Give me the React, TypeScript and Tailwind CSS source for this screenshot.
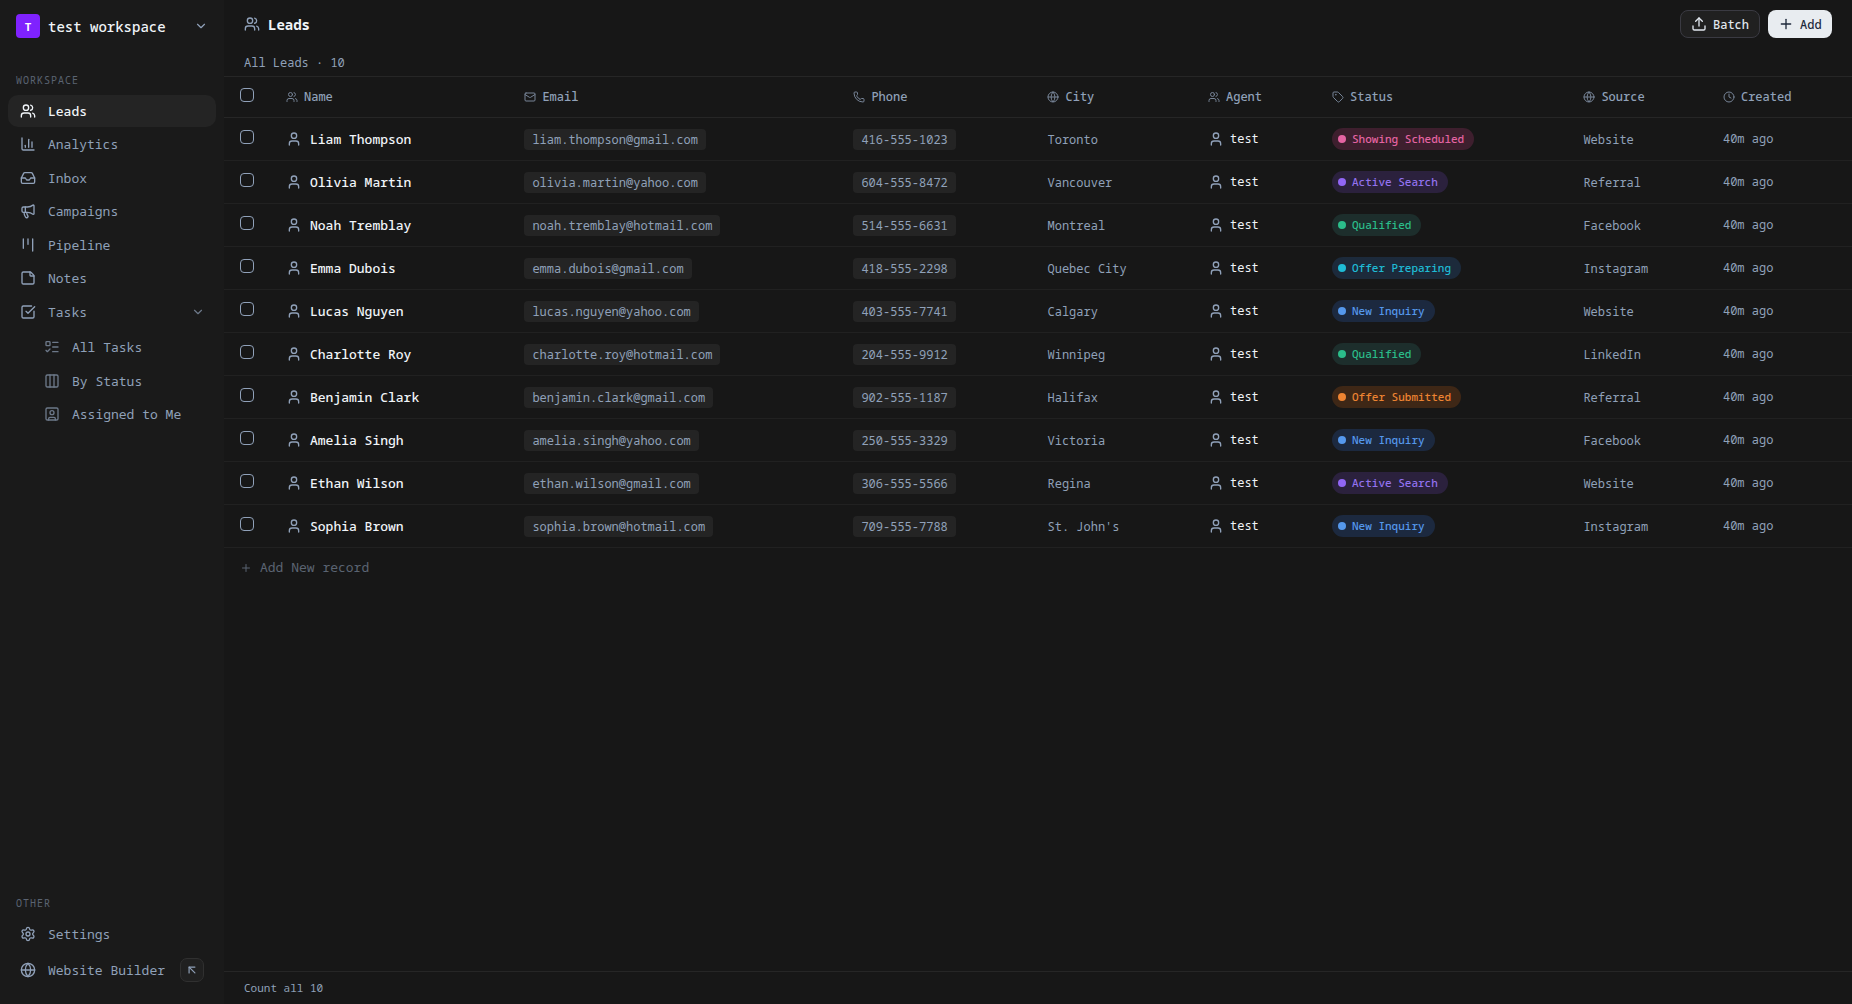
import type { ReactNode } from "react";
import {
  ArrowUpLeft,
  ChartColumn,
  ChevronDown,
  Clock,
  Columns3,
  Globe,
  Inbox,
  Kanban,
  ListTodo,
  Mail,
  Megaphone,
  Phone,
  Plus,
  Settings,
  SquareCheckBig,
  SquareUser,
  StickyNote,
  Tag,
  Upload,
  User,
  Users,
  type LucideIcon,
} from "lucide-react";
import clsx from "clsx";

type Status =
  | "Showing Scheduled"
  | "Active Search"
  | "Qualified"
  | "Offer Preparing"
  | "New Inquiry"
  | "Offer Submitted";

interface Lead {
  name: string;
  email: string;
  phone: string;
  city: string;
  status: Status;
  source: string;
}

const leads: Lead[] = [
  { name: "Liam Thompson", email: "liam.thompson@gmail.com", phone: "416-555-1023", city: "Toronto", status: "Showing Scheduled", source: "Website" },
  { name: "Olivia Martin", email: "olivia.martin@yahoo.com", phone: "604-555-8472", city: "Vancouver", status: "Active Search", source: "Referral" },
  { name: "Noah Tremblay", email: "noah.tremblay@hotmail.com", phone: "514-555-6631", city: "Montreal", status: "Qualified", source: "Facebook" },
  { name: "Emma Dubois", email: "emma.dubois@gmail.com", phone: "418-555-2298", city: "Quebec City", status: "Offer Preparing", source: "Instagram" },
  { name: "Lucas Nguyen", email: "lucas.nguyen@yahoo.com", phone: "403-555-7741", city: "Calgary", status: "New Inquiry", source: "Website" },
  { name: "Charlotte Roy", email: "charlotte.roy@hotmail.com", phone: "204-555-9912", city: "Winnipeg", status: "Qualified", source: "LinkedIn" },
  { name: "Benjamin Clark", email: "benjamin.clark@gmail.com", phone: "902-555-1187", city: "Halifax", status: "Offer Submitted", source: "Referral" },
  { name: "Amelia Singh", email: "amelia.singh@yahoo.com", phone: "250-555-3329", city: "Victoria", status: "New Inquiry", source: "Facebook" },
  { name: "Ethan Wilson", email: "ethan.wilson@gmail.com", phone: "306-555-5566", city: "Regina", status: "Active Search", source: "Website" },
  { name: "Sophia Brown", email: "sophia.brown@hotmail.com", phone: "709-555-7788", city: "St. John's", status: "New Inquiry", source: "Instagram" },
];

const statusStyles: Record<Status, { pill: string; dot: string }> = {
  "Showing Scheduled": { pill: "bg-[#3e1f2e] text-[#e564a3]", dot: "bg-[#e564a3]" },
  "Active Search": { pill: "bg-[#2b213d] text-[#9373f0]", dot: "bg-[#9166f5]" },
  Qualified: { pill: "bg-[#1d2e2c] text-[#2bbd8a]", dot: "bg-[#2bbd8a]" },
  "Offer Preparing": { pill: "bg-[#1c2a3b] text-[#1fbcd6]", dot: "bg-[#1fbcd6]" },
  "New Inquiry": { pill: "bg-[#1c293f] text-[#5598ec]", dot: "bg-[#5598ec]" },
  "Offer Submitted": { pill: "bg-[#3e2716] text-[#ee8432]", dot: "bg-[#ee8432]" },
};

const columns: { label: string; icon: LucideIcon }[] = [
  { label: "Name", icon: Users },
  { label: "Email", icon: Mail },
  { label: "Phone", icon: Phone },
  { label: "City", icon: Globe },
  { label: "Agent", icon: Users },
  { label: "Status", icon: Tag },
  { label: "Source", icon: Globe },
  { label: "Created", icon: Clock },
];

const rowGrid =
  "grid grid-cols-[46px_238.4px_329px_194.1px_160.5px_124px_251.4px_139.6px_1fr] items-center pl-4 border-b";

function NavItem({
  icon: Icon,
  label,
  active,
  nested,
  children,
}: {
  icon: LucideIcon;
  label: string;
  active?: boolean;
  nested?: boolean;
  children?: ReactNode;
}) {
  return (
    <div
      className={clsx(
        "flex h-[31.5px] items-center gap-3 rounded-[10px] pr-[11px]",
        nested ? "pl-9" : "pl-3",
        active ? "bg-[#242424] font-medium text-[#f1f5f9]" : "text-[#90a1b9]"
      )}
    >
      <Icon size={16} className={clsx("shrink-0", nested && "opacity-70")} />
      <span className="pt-px text-[13px] leading-[19.5px]">{label}</span>
      {children}
    </div>
  );
}

function SectionLabel({ children }: { children: ReactNode }) {
  return (
    <div className="px-4 text-[10px] leading-[15px] tracking-[1px] text-[#5b6472]">
      {children}
    </div>
  );
}

function Sidebar() {
  return (
    <aside className="flex w-56 shrink-0 flex-col bg-[#1a1a1a]">
      <div className="flex h-[52px] items-center pl-4 pr-4">
        <div className="flex size-6 items-center justify-center rounded-[4px] bg-[#7f22fe] pt-0.5 text-[11px] font-bold text-white">
          T
        </div>
        <span className="ml-2 text-[14px] font-medium text-[#f1f5f9]">test workspace</span>
        <ChevronDown size={14} className="ml-auto text-[#90a1b9]" />
      </div>

      <div className="mt-[21px]">
        <SectionLabel>WORKSPACE</SectionLabel>
      </div>
      <nav className="mt-[7px] flex flex-col gap-0.5 px-2">
        <NavItem icon={Users} label="Leads" active />
        <NavItem icon={ChartColumn} label="Analytics" />
        <NavItem icon={Inbox} label="Inbox" />
        <NavItem icon={Megaphone} label="Campaigns" />
        <NavItem icon={Kanban} label="Pipeline" />
        <NavItem icon={StickyNote} label="Notes" />
        <NavItem icon={SquareCheckBig} label="Tasks">
          <ChevronDown size={14} className="ml-auto opacity-70" />
        </NavItem>
        <div className="mt-0.5 flex flex-col gap-0.5">
          <NavItem icon={ListTodo} label="All Tasks" nested />
          <NavItem icon={Columns3} label="By Status" nested />
          <NavItem icon={SquareUser} label="Assigned to Me" nested />
        </div>
      </nav>

      <div className="mt-auto pb-4">
        <SectionLabel>OTHER</SectionLabel>
        <nav className="mt-2 flex flex-col gap-0.5 px-2">
          <NavItem icon={Settings} label="Settings" />
          <div className="flex h-9 items-center gap-3 pl-3 pr-3 text-[#90a1b9]">
            <Globe size={16} />
            <span className="pt-px text-[13px]">Website Builder</span>
            <span className="ml-auto flex size-6 items-center justify-center rounded-[7px] border border-[#303030] bg-[#202020]">
              <ArrowUpLeft size={14} />
            </span>
          </div>
        </nav>
      </div>
    </aside>
  );
}

function Checkbox() {
  return <div className="mb-1 size-3.5 rounded-[4px] border border-[#90a1b9]" />;
}

function Chip({ children }: { children: ReactNode }) {
  return (
    <span className="mt-px inline-flex h-[21px] items-center rounded-[4px] bg-[#242424] px-2 pt-px">
      {children}
    </span>
  );
}

function StatusPill({ status }: { status: Status }) {
  const styles = statusStyles[status];
  return (
    <span
      className={clsx(
        "inline-flex h-[22px] items-center gap-1.5 rounded-full pl-1.5 pr-2.5 text-[11px] font-medium",
        styles.pill
      )}
    >
      <span className={clsx("size-2 rounded-full", styles.dot)} />
      {status}
    </span>
  );
}

function LeadRow({ lead }: { lead: Lead }) {
  return (
    <div className={clsx(rowGrid, "h-[43px] border-[#212121] text-[12px] text-[#90a1b9]")}>
      <Checkbox />
      <div className="flex items-center gap-2 text-[13px]">
        <User size={16} />
        <span className="pt-0.5 font-medium text-[#f1f5f9]">{lead.name}</span>
      </div>
      <div className="flex">
        <Chip>{lead.email}</Chip>
      </div>
      <div className="flex">
        <Chip>{lead.phone}</Chip>
      </div>
      <div className="pt-0.5">{lead.city}</div>
      <div className="flex items-center gap-1.5">
        <User size={16} />
        <span className="text-[#f1f5f9]">test</span>
      </div>
      <div className="flex">
        <StatusPill status={lead.status} />
      </div>
      <div className="pt-0.5">{lead.source}</div>
      <div>40m ago</div>
    </div>
  );
}

export default function App() {
  return (
    <div className="flex h-[1004px] bg-[#171717] font-['Noto_Sans_Mono','DejaVu_Sans_Mono',monospace]">
      <Sidebar />
      <main className="flex min-w-0 flex-1 flex-col">
        <header className="flex h-12 items-center pl-5 pr-5">
          <Users size={16} className="text-[#90a1b9]" />
          <h1 className="ml-2 pt-px text-[14px] font-bold text-[#f1f5f9]">Leads</h1>
          <div className="ml-auto flex gap-2 text-[12px] font-medium">
            <button className="flex h-7 w-20 items-center gap-1.5 rounded-lg border border-[#3a3a42] bg-[#202020] pl-2.5 text-[#e2e8f0]">
              <Upload size={16} />
              <span className="pt-px">Batch</span>
            </button>
            <button className="flex h-7 w-16 items-center gap-1.5 rounded-lg bg-[#e8ecf0] pl-2.5 text-[#1e293b]">
              <Plus size={16} />
              <span className="pt-px">Add</span>
            </button>
          </div>
        </header>

        <div className="flex h-[29px] items-center border-b border-[#262626] pl-5 pt-0.5 text-[12px] text-[#90a1b9]">
          All Leads · 10
        </div>

        <div className={clsx(rowGrid, "h-[41px] border-[#262626] text-[12px] font-medium text-[#90a1b9]")}>
          <Checkbox />
          {columns.map(({ label, icon: Icon }) => (
            <div key={label} className="flex items-center gap-1.5">
              <Icon size={12} className="opacity-80" />
              {label}
            </div>
          ))}
        </div>

        {leads.map((lead) => (
          <LeadRow key={lead.email} lead={lead} />
        ))}

        <button className="flex h-10 items-center gap-2 pl-4 text-[13px] text-[#5b6472]">
          <Plus size={12} />
          Add New record
        </button>

        <footer className="mt-auto flex h-[33px] items-center border-t border-[#262626] pl-5 text-[11px] text-[#90a1b9]">
          Count all 10
        </footer>
      </main>
    </div>
  );
}
